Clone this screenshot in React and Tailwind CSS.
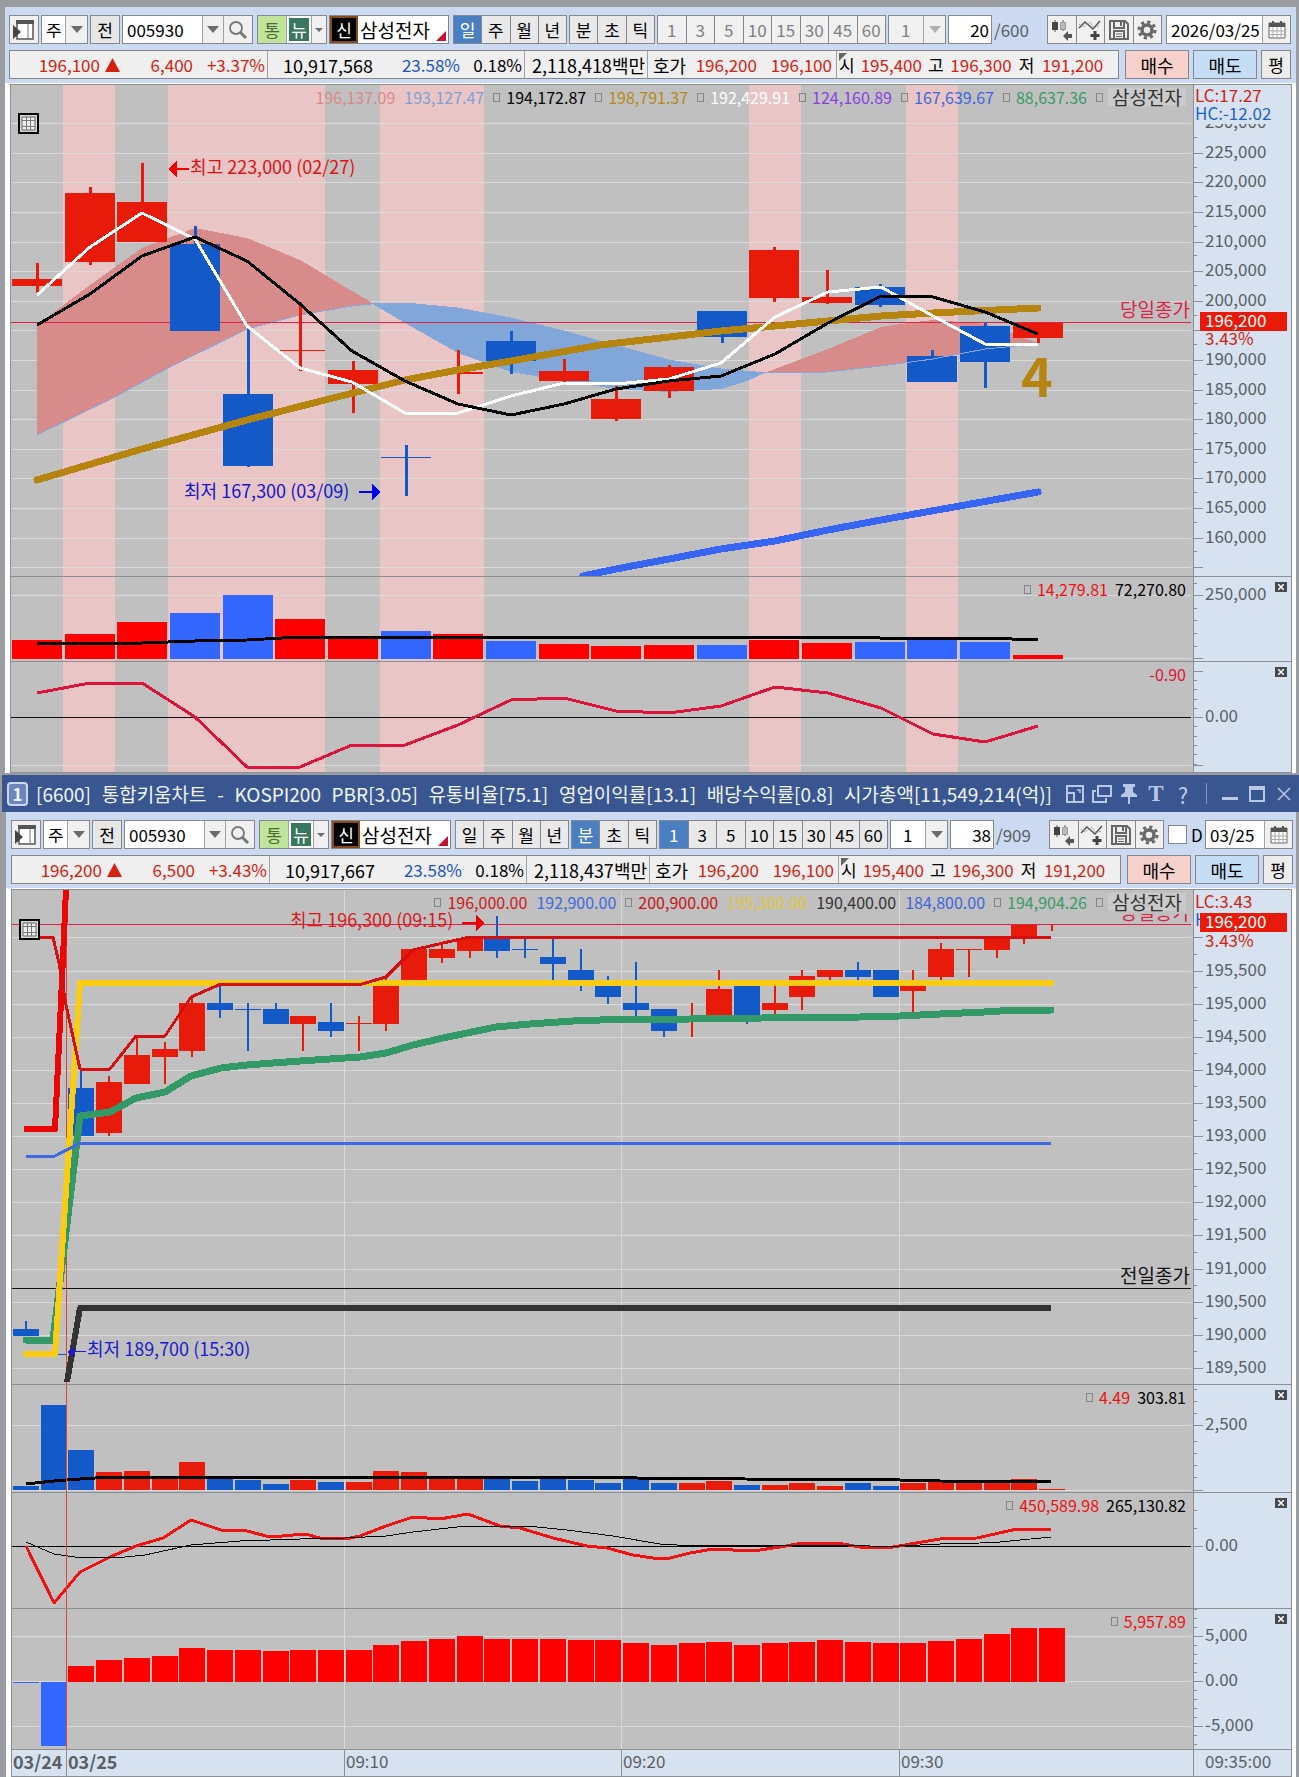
import React from "react";

/* ---------- shared data helpers ---------- */
const RED = "#e81a0a";
const BLUE = "#135ac8";
const GRID = "#d9d9d9";
const AXIS = "#8c8f93";
const LABEL = "#5a5f66";

const pts = (list) => list.map((p) => p.join(",")).join(" ");

const day = { cx: (i) => Math.round(37 + 52.67 * i), w: 50, left: (i) => Math.round(12 + 52.67 * i) };
const min = { cx: (i) => Math.round(26 + 27.73 * i), w: 26, left: (i) => Math.round(13 + 27.73 * i) };

/* candle: [colour, high, bodyTop, bodyBottom, low] */
const dayCandles = [
  ["r", 263, 279, 286, 293], ["r", 187, 193, 262, 265], ["r", 163, 202, 242, 242],
  ["b", 226, 244, 331, 331], ["b", 329, 394, 466, 467], ["r", 302, 350, 351, 371],
  ["r", 361, 370, 384, 413], ["b", 445, 457, 458, 496], ["r", 350, 372, 374, 394],
  ["b", 331, 341, 361, 374], ["r", 359, 371, 381, 382], ["r", 386, 399, 419, 421],
  ["r", 365, 367, 391, 398], ["b", 311, 311, 337, 343], ["r", 247, 250, 298, 302],
  ["r", 270, 297, 303, 304], ["b", 284, 287, 305, 307], ["b", 350, 356, 382, 382],
  ["b", 323, 326, 362, 388], ["r", 323, 323, 338, 343],
];
const dayVolume = [
  ["r", 640], ["r", 634], ["r", 622], ["b", 613], ["b", 595], ["r", 619], ["r", 637], ["b", 631],
  ["r", 634], ["b", 641], ["r", 644], ["r", 646], ["r", 645], ["b", 645], ["r", 640], ["r", 643],
  ["b", 642], ["b", 640], ["b", 642], ["r", 655],
];
const bands = [[63, 115], [168, 325], [380, 484], [749, 801], [906, 958]];

const minCandles = [
  ["b", 1321, 1329, 1336, 1336], ["b", 1354, 1354, 1355, 1355], ["b", 1070, 1088, 1136, 1136],
  ["r", 1076, 1082, 1133, 1136], ["r", 1037, 1055, 1084, 1084], ["r", 1042, 1049, 1057, 1084],
  ["r", 998, 1003, 1051, 1057], ["b", 983, 1003, 1010, 1018], ["b", 1003, 1009, 1010, 1051],
  ["b", 1003, 1009, 1024, 1024], ["r", 1016, 1016, 1024, 1051], ["b", 1003, 1022, 1031, 1037],
  ["r", 1016, 1023, 1024, 1051], ["r", 976, 986, 1024, 1031], ["r", 949, 949, 980, 980],
  ["r", 943, 949, 958, 963], ["r", 938, 938, 951, 958], ["b", 916, 938, 951, 958],
  ["b", 938, 949, 950, 958], ["b", 938, 957, 964, 980], ["b", 949, 970, 980, 991],
  ["b", 976, 980, 997, 1004], ["b", 962, 1003, 1010, 1017], ["b", 1009, 1009, 1031, 1037],
  ["r", 1003, 1018, 1019, 1037], ["r", 970, 989, 1016, 1016], ["b", 986, 986, 1017, 1024],
  ["r", 986, 1003, 1010, 1016], ["r", 970, 976, 997, 1010], ["r", 970, 970, 977, 980],
  ["b", 962, 970, 977, 980], ["b", 970, 970, 997, 997], ["r", 970, 986, 991, 1012],
  ["r", 943, 949, 977, 980], ["r", 949, 949, 950, 977], ["r", 938, 938, 950, 958],
  ["r", 924, 924, 937, 944], ["r", 924, 924, 925, 931],
];
const minVolume = [
  ["b", 1486], ["b", 1405], ["b", 1450], ["r", 1472], ["r", 1471], ["r", 1478], ["r", 1462], ["b", 1478],
  ["b", 1480], ["b", 1484], ["r", 1480], ["b", 1482], ["r", 1482], ["r", 1471], ["r", 1472], ["r", 1478],
  ["r", 1478], ["b", 1478], ["b", 1481], ["b", 1478], ["b", 1480], ["b", 1483], ["b", 1479], ["b", 1483],
  ["r", 1483], ["r", 1481], ["b", 1485], ["r", 1485], ["r", 1483], ["r", 1486], ["b", 1483], ["b", 1486],
  ["r", 1483], ["r", 1481], ["r", 1483], ["r", 1483], ["r", 1479], ["r", 1489],
];
const netBuy = [
  1666, 1660, 1658, 1656, 1648, 1650, 1650, 1651, 1650, 1650, 1650, 1645, 1641, 1639, 1636, 1639, 1639,
  1639, 1640, 1640, 1643, 1645, 1643, 1642, 1645, 1643, 1642, 1640, 1642, 1643, 1643, 1641, 1639, 1634,
  1628, 1628,
];

/* ---------- small building blocks ---------- */
const Chevron = ({ muted }) => (
  <svg viewBox="0 0 12 7" className="h-[7px] w-3" aria-hidden="true">
    <path d="M0 0h12L6 7z" fill={muted ? "#b0b0b0" : "#6b6b6b"} />
  </svg>
);

const box = "flex h-full border border-[#84888c]";
const cell = "flex items-center justify-center";

function Combo({ label, value, className, disabled }) {
  return (
    <div className={`relative flex h-full border border-[#84888c] ${className} ${disabled ? "bg-[#f0f0f0]" : "bg-white"}`}>
      <select
        aria-label={label}
        disabled={disabled}
        defaultValue={value}
        className={`h-full w-full appearance-none pl-3 ${disabled ? "text-[#808080] opacity-100" : "text-black"}`}
      >
        <option>{value}</option>
      </select>
      <span className="pointer-events-none absolute inset-y-0 right-0 flex w-[22px] items-center justify-center border-l border-[#a0a3a6] bg-[#f0f0f0]">
        <Chevron muted={disabled} />
      </span>
    </div>
  );
}

function Segments({ items, active, disabled, className }) {
  return (
    <div className={`${box} divide-x divide-[#84888c] ${className}`}>
      {items.map((t) => (
        <button
          key={t}
          type="button"
          disabled={disabled}
          className={`${cell} flex-1 basis-0 ${
            t === active ? "bg-[#4a7fc1] text-white" : disabled ? "bg-[#f0f0f0] text-[#808080]" : "bg-[#e9e9e9] text-black"
          }`}
        >
          {t}
        </button>
      ))}
    </div>
  );
}

const ToggleIcon = () => (
  <svg viewBox="0 0 22 22" className="h-[22px] w-[22px]" aria-hidden="true">
    <rect x="4" y="2" width="16" height="18" fill="#fff" stroke="#555" strokeWidth="1.5" />
    <path d="M3 1h18v4H3z" fill="#555" />
    <path d="M15 5v15" stroke="#777" />
    <path d="M0 6l8 7-8 7z" fill="#444" />
  </svg>
);
const SearchIcon = () => (
  <svg viewBox="0 0 20 20" className="h-5 w-5" fill="none" stroke="#777" aria-hidden="true">
    <circle cx="8" cy="8" r="6" strokeWidth="1.8" />
    <path d="M12.500 12.500L18 18" strokeWidth="3" />
  </svg>
);
const CandleIcon = () => (
  <svg viewBox="0 0 24 24" className="h-6 w-6" aria-hidden="true">
    <path d="M5 2v12M13 2v11" stroke="#555" />
    <path d="M2 4h6v8H2z" fill="#444" />
    <path d="M10.500 4.500h5v7h-5z" fill="#bbb" stroke="#999" />
    <path d="M13 18l5-5v3h4v4h-4v3z" fill="#555" />
  </svg>
);
const LineIcon = () => (
  <svg viewBox="0 0 24 24" className="h-6 w-6" fill="none" aria-hidden="true">
    <path d="M1 10l6-6 8 7 7-8" stroke="#555" strokeWidth="1.500" />
    <path d="M1 6l4 3 7-5 4 6 5-2" stroke="#999" strokeDasharray="2 1" />
    <path d="M17 13v9M12.500 17.500h9" stroke="#444" strokeWidth="3" />
  </svg>
);
const SaveIcon = () => (
  <svg viewBox="0 0 22 22" className="h-[22px] w-[22px]" fill="none" stroke="#666" strokeWidth="2" aria-hidden="true">
    <path d="M2 2h15l3 3v15H2z" />
    <path d="M6 2v7h10V2M6 20v-8h10v8" />
    <path d="M8 15h6M8 17.500h6" strokeWidth="1" />
    <path d="M13 3v4" />
  </svg>
);
const GearIcon = () => (
  <svg viewBox="0 0 22 22" className="h-[22px] w-[22px]" fill="none" stroke="#686868" aria-hidden="true">
    <circle cx="11" cy="11" r="5" strokeWidth="3.500" />
    <circle cx="11" cy="11" r="8" strokeWidth="3" strokeDasharray="3.140 3.140" />
  </svg>
);
const CalendarIcon = () => (
  <svg viewBox="0 0 18 18" className="h-[18px] w-[18px]" aria-hidden="true">
    <path d="M1 2h16v15H1z" fill="#fff" stroke="#666" />
    <path d="M1 2h16v4H1zM4 0h2v3H4zM12 0h2v3h-2z" fill="#555" />
    <path d="M1 10h16M1 13.500h16M5 6v11M9 6v11M13 6v11" stroke="#aaa" />
  </svg>
);

const tools = [
  ["봉 추가", CandleIcon],
  ["지표 추가", LineIcon],
  ["저장", SaveIcon],
  ["설정", GearIcon],
];

function Toolbar({ intraday, count, total, date }) {
  const id = intraday ? "m" : "d";
  return (
    <div className="flex h-[29px] gap-[2px] text-[17px] leading-none">
      <button type="button" aria-label="메뉴" className={`${box} ${cell} w-[30px] bg-[#f0f0f0]`}><ToggleIcon /></button>
      <Combo label="종류" value="주" className="w-[47px] [&>select]:pl-1" />
      <button type="button" className={`${box} ${cell} w-[30px] bg-[#e6e6e6]`}>전</button>
      <div className={`${box} w-[131px] bg-white`}>
        <input aria-label="종목코드" defaultValue="005930" className="w-0 flex-1 pl-1 text-black" />
        <button type="button" aria-label="종목 목록" className={`${cell} w-[21px] border-l border-[#a0a3a6] bg-[#f0f0f0]`}><Chevron /></button>
        <button type="button" aria-label="검색" className={`${cell} w-[29px] border-l border-[#a0a3a6] bg-[#f0f0f0]`}><SearchIcon /></button>
      </div>
      <div className={`${box} ml-[2px] w-[70px] bg-[#f0f0f0]`}>
        <button type="button" className={`${cell} w-7 bg-[#bfe49a] text-[#4a6b35]`}>통</button>
        <button type="button" className={`${cell} w-[26px] border-x border-[#a0a3a6] bg-white p-[2px]`}>
          <span className={`${cell} h-full w-full bg-[#39785e] text-white`}>뉴</span>
        </button>
        <button type="button" aria-label="뉴스 목록" className={`${cell} flex-1`}>
          <svg viewBox="0 0 8 4" className="h-1 w-2" aria-hidden="true"><path d="M0 0h8L4 4z" fill="#6b6b6b" /></svg>
        </button>
      </div>
      <div className={`${box} relative min-w-[100px] flex-1 items-center bg-white`}>
        <span className={`${cell} h-full w-7 shrink-0 border-2 border-[#8a4b14] bg-black text-white`}>신</span>
        <span className="pl-[2px] text-[19px] whitespace-nowrap">삼성전자</span>
        <svg viewBox="0 0 10 10" className="absolute right-[2px] bottom-[2px] h-[10px] w-[10px]" aria-hidden="true">
          <path d="M10 0v10H0z" fill="#c8102e" />
        </svg>
      </div>
      <Segments items={["일", "주", "월", "년"]} active={intraday ? "" : "일"} className="ml-[2px] w-[114px]" />
      <Segments items={["분", "초", "틱"]} active={intraday ? "분" : ""} className="w-[86px]" />
      <Segments
        items={["1", "3", "5", "10", "15", "30", "45", "60"]}
        active={intraday ? "1" : ""}
        disabled={!intraday}
        className="w-[229px]"
      />
      <Combo label="주기" value="1" disabled={!intraday} className="w-[58px]" />
      <input aria-label="봉 개수" defaultValue={count} className="h-full w-[44px] border border-[#84888c] bg-white pr-[2px] text-right text-black" />
      <span className="flex w-[51px] items-center text-[#5a5f66]">/{total}</span>
      <div className={`${box} w-[115px] divide-x divide-[#84888c] bg-[#f0f0f0]`}>
        {tools.map(([name, Icon]) => (
          <button key={name} type="button" aria-label={name} className={`${cell} flex-1`}><Icon /></button>
        ))}
      </div>
      <div className="ml-[2px] flex w-[125px] items-center">
        {intraday && (
          <label className="flex flex-1 items-center gap-1">
            <input type="checkbox" id={`${id}-d`} className="h-[19px] w-[19px] appearance-none border border-[#84888c] bg-white" />
            D
          </label>
        )}
        <div className={`${box} bg-white ${intraday ? "w-[88px]" : "w-full"}`}>
          <input aria-label="날짜" defaultValue={date} className="w-0 flex-1 pl-1 text-black" />
          <button type="button" aria-label="달력" className={`${cell} w-7 border-l border-[#a0a3a6] bg-[#f0f0f0]`}><CalendarIcon /></button>
        </div>
      </div>
    </div>
  );
}

function Quote({ price, change, rate, volume, amount }) {
  const red = "text-[#d8200f]";
  return (
    <div className="flex h-[29px] gap-[4px] text-[17px] leading-none">
      <div className="mr-[2px] flex flex-1 items-center border border-[#84888c] bg-[#efefef] whitespace-nowrap">
        <span className={`w-[90px] text-right ${red}`}>{price}</span>
        <svg viewBox="0 0 15 14" className="ml-[5px] h-[14px] w-[15px]" aria-hidden="true"><path d="M7.500 0L15 14H0z" fill="#d8200f" /></svg>
        <span className={`w-[73px] text-right ${red}`}>{change}</span>
        <span className={`flex h-full w-[75px] items-center justify-end border-r border-[#a0a3a6] pr-[2px] ${red}`}>{rate}</span>
        <span className="w-[105px] text-right text-[18px]">{volume}</span>
        <span className="w-[87px] text-right text-[#1c53c4]">23.58%</span>
        <span className="flex h-full w-[65px] items-center justify-end border-r border-[#a0a3a6] pr-[2px]">0.18%</span>
        <span className="flex h-full w-[123px] items-center justify-end border-r border-[#a0a3a6] pr-[2px] text-[18px]">{amount}백만</span>
        <span className="w-[44px] pl-[5px] text-[18px]">호가</span>
        <span className={`w-[65px] text-right ${red}`}>196,200</span>
        <span className={`w-[75px] text-right ${red}`}>196,100</span>
        <span className="relative ml-1 flex h-full w-[22px] items-center border-l border-[#a0a3a6] pl-[2px]">
          <svg viewBox="0 0 8 8" className="absolute top-[2px] left-[2px] h-2 w-2" aria-hidden="true"><path d="M0 0h8L0 8z" fill="#666" /></svg>
          시
        </span>
        <span className={`w-[64px] text-right ${red}`}>195,400</span>
        <span className="pl-[6px]">고</span>
        <span className={`w-[68px] text-right ${red}`}>196,300</span>
        <span className="pl-[7px]">저</span>
        <span className={`w-[69px] text-right ${red}`}>191,200</span>
      </div>
      <button type="button" className="w-[64px] border border-[#84888c] bg-[#f6d0cb] text-[18px]">매수</button>
      <button type="button" className="w-[64px] border border-[#84888c] bg-[#c5ddf5] text-[18px]">매도</button>
      <button type="button" className="w-[30px] border border-[#84888c] bg-[#ececec]">평</button>
    </div>
  );
}

/* ---------- chart primitives ---------- */
function Candles({ data, scale, wick }) {
  return data.map(([c, h, t, b, l], i) => (
    <g key={i} fill={c === "r" ? RED : BLUE}>
      <rect x={scale.cx(i) - 1} y={h} width={wick} height={Math.max(l - h, 1)} />
      <rect x={scale.left(i)} y={t} width={scale.w} height={b - t} />
    </g>
  ));
}
function Bars({ data, scale, base, red, blue }) {
  return data.map(([c, t], i) => (
    <rect key={i} x={scale.left(i)} y={t} width={scale.w} height={base - t} fill={c === "r" ? red : blue} />
  ));
}
const Line = ({ data, color, width, round }) => (
  <polyline points={pts(data)} fill="none" stroke={color} strokeWidth={width} strokeLinejoin="round" strokeLinecap={round ? "round" : "butt"} />
);
const HGrid = ({ ys, x1, x2 = 1191 }) =>
  ys.map((y) => <rect key={y} x={x1} y={y} width={x2 - x1} height="1" fill={GRID} />);
const Times = ({ top, height }) =>
  [344, 621, 899].map((x) => <rect key={x} x={x} y={top} width="1" height={height} fill={GRID} />);
const Bands = ({ top, height }) =>
  bands.map(([a, b]) => <rect key={a} x={a} y={top} width={b - a} height={height} fill="#e9c5c6" />);

function Legend({ items, name }) {
  return (
    <div className={`absolute top-0 right-0 flex items-center pt-[3px] pr-[7px] text-[16px] leading-[18px] whitespace-nowrap ${name ? "gap-[9px]" : "gap-[7px]"}`}>
      {items.map(([text, color, mark], i) => (
        <span key={i} className="flex items-center gap-[6px]" style={{ color }}>
          {mark && <i className="h-[9px] w-[7px] border border-[#858585]" />}
          {text}
        </span>
      ))}
      {name && (
        <>
          <i className="h-[9px] w-[7px] border border-[#858585]" />
          <span className="-ml-1 w-[78px] bg-[#cacaca] text-center text-[19px] text-[#333]">{name}</span>
        </>
      )}
    </div>
  );
}

function Pane({ left, top, height, children, axis, legend, name, closable, grid }) {
  return (
    <div className={`grid ${left === 11 ? "grid-cols-[1182fr_98fr]" : "grid-cols-[1181fr_98fr]"} border-b border-[#8c8f93]`}>
      <div className="relative min-w-0">
        <svg viewBox={`${left} ${top} ${1193 - left} ${height}`} className="block h-auto w-full" shapeRendering="crispEdges">
          <rect x={left} y={top} width={1193 - left} height={height} fill="#c0c0c0" />
          {children}
        </svg>
        <Legend items={legend} name={name} />
        {grid && (
          <button type="button" aria-label="데이터 표" className={`absolute left-[7px] flex h-[21px] w-[21px] items-center justify-center border-2 border-black bg-[#d4d4d4] ${grid}`}>
            <svg viewBox="0 0 15 15" className="h-[15px] w-[15px]" aria-hidden="true">
              <path d="M1 1h13v13H1z" fill="#eee" stroke="#666" />
              <path d="M5.500 1v13M9.500 1v13M1 4.500h13M1 10.500h13" stroke="#777" />
            </svg>
          </button>
        )}
      </div>
      <div className="relative min-w-0">
        <svg viewBox={`1193 ${top} 98 ${height}`} className="block h-auto w-full bg-[#d6e2f0]" fontSize="17">
          <rect x="1193" y={top} width="1" height={height} fill={AXIS} />
          {axis}
        </svg>
        {closable && (
          <button type="button" aria-label="닫기" className="absolute top-[5px] right-1 flex h-[10px] w-3 items-center justify-center bg-[#474b50]">
            <svg viewBox="0 0 6 6" className="h-[6px] w-[6px]" stroke="#fff" strokeWidth="1.500" aria-hidden="true"><path d="M0 0l6 6M6 0L0 6" /></svg>
          </button>
        )}
      </div>
    </div>
  );
}

const Ticks = ({ major = [], minor = [] }) => (
  <g fill={AXIS}>
    {major.map((y) => <rect key={y} x="1193" y={y} width="10" height="1" />)}
    {minor.map((y) => <rect key={y} x="1193" y={y} width="4" height="1" />)}
  </g>
);
const AxisText = ({ y, children, fill = LABEL, x = 1205 }) => <text x={x} y={y} fill={fill}>{children}</text>;
const range = (a, b, s) => { const r = []; for (let v = a; v <= b; v += s) r.push(Math.round(v)); return r; };

/* ---------- daily chart ---------- */
const dayGrid = range(123.3, 570, 29.59);
const spanA = [[37, 325], [90, 285], [142, 248], [195, 228], [247, 238], [300, 260], [352, 291], [371, 302]];
const spanB = [[371, 304], [352, 306], [300, 315], [247, 329], [168, 368], [115, 397], [37, 435]];
const blueTop = [[371, 303], [405, 303], [458, 308], [511, 318], [564, 331], [600, 341], [669, 360], [721, 369], [767, 373]];
const blueBottom = [[767, 372], [747, 381], [721, 389], [669, 392], [616, 389], [564, 381], [511, 372], [458, 353], [405, 323]];
const red2Top = [[767, 372], [828, 349], [881, 327], [908, 323], [933, 320], [985, 324], [1038, 343]];
const red2Bottom = [[1038, 344], [985, 349], [933, 359], [881, 366], [828, 372], [767, 373]];

function DailyChart() {
  return (
    <div className="border-x border-t border-[#8c8f93]">
      <Pane
        left={11} top={85} height={491} name="삼성전자" grid="top-[28px]"
        legend={[
          ["196,137.09", "#d88b8b"], ["193,127.47", "#80a0d6"], ["194,172.87", "#000", 1], ["198,791.37", "#b5891a", 1],
          ["192,429.91", "#fff", 1], ["124,160.89", "#8a3fe0", 1], ["167,639.67", "#3f66dc", 1], ["88,637.36", "#3a9a66", 1],
        ]}
        axis={
          <>
            <Ticks major={dayGrid.slice(1)} minor={range(137, 560, 29.59)} />
            <AxisText y={128}>230,000</AxisText>
            <rect x="1194" y="85" width="97" height="39" fill="#d6e2f0" />
            {dayGrid.slice(1, 15).map((y, k) => k !== 6 && k < 14 && <AxisText key={y} y={y + 5}>{`${225 - 5 * k},000`}</AxisText>)}
            <AxisText x={1195} y={102} fill="#d8200f">LC:17.27</AxisText>
            <AxisText x={1195} y={120} fill="#1c63c8">HC:-12.02</AxisText>
            <rect x="1200" y="312" width="87" height="19" fill={RED} />
            <AxisText y={327} fill="#fff">196,200</AxisText>
            <AxisText y={345} fill="#d8200f">3.43%</AxisText>
          </>
        }
      >
        <Bands top={85} height={491} />
        <HGrid ys={dayGrid} x1={11} />
        <polygon points={pts([...spanA, ...spanB])} fill="#d88b8b" />
        <polygon points={pts([...blueTop, ...blueBottom])} fill="#80a6da" />
        <polygon points={pts([...red2Top, ...red2Bottom])} fill="#d88b8b" />
        <Line data={[...spanB].reverse().concat(blueTop)} color="#8aa6dc" width="1" />
        <rect x="11" y="322" width="1180" height="1" fill="#dc2348" />
        <Candles data={dayCandles} scale={day} wick={3} />
        <Line data={[...red2Bottom].reverse()} color="#8aa6dc" width="1" />
        <Line round color="#b5850f" width="7" data={[[37, 480], [142, 449], [247, 420], [325, 400], [405, 380], [458, 370], [511, 361], [600, 345], [721, 331], [775, 326], [828, 321], [881, 316], [933, 313], [1038, 308]]} />
        <Line color="#3565f2" width="7" round data={[[583, 576], [616, 569], [669, 559], [721, 549], [775, 541], [828, 530], [881, 520], [1038, 492]]} />
        <Line color="#fff" width="3" data={[[37, 295], [90, 247], [142, 213], [195, 239], [247, 326], [300, 368], [352, 382], [405, 413], [458, 413], [511, 396], [564, 383], [616, 384], [669, 379], [721, 363], [775, 317], [828, 292], [881, 287], [933, 316], [985, 344], [1038, 344]]} />
        <Line color="#000" width="3" data={[[37, 325], [90, 294], [142, 256], [195, 237], [247, 261], [300, 304], [352, 351], [405, 381], [458, 404], [511, 415], [564, 404], [616, 389], [669, 381], [721, 376], [775, 354], [828, 323], [881, 296], [933, 297], [985, 312], [1038, 334]]} />
        <g fontSize="18">
          <text x="190" y="174" fill="#e01010">최고 223,000 (02/27)</text>
          <path d="M168 169l9-8v16zM177 168h12v2h-12z" fill="#f00000" />
          <text x="184" y="498" fill="#1414cc">최저 167,300 (03/09)</text>
          <path d="M381 492l-9-8v16zM359 491h13v2h-13z" fill="#0000f0" />
          <text x="1190" y="317" fill="#dc2348" textAnchor="end" fontSize="19">당일종가</text>
          <text x="1021" y="397" fill="#b5850f" fontSize="54" fontWeight="700">4</text>
        </g>
      </Pane>
      <Pane
        left={11} top={577} height={84} closable
        legend={[["14,279.81", "#f01010", 1], ["72,270.80", "#000"]]}
        axis={<><Ticks major={[595, 658]} minor={[583, 608, 620, 633, 646]} /><AxisText y={600}>250,000</AxisText></>}
      >
        <Bands top={577} height={84} />
        <HGrid ys={[595, 658]} x1={11} />
        <Bars data={dayVolume} scale={day} base={659} red="#ff0000" blue="#3366ff" />
        <Line color="#000" width="3" data={[[37, 643], [142, 643], [195, 641], [247, 640], [300, 637], [880, 638], [985, 638], [1038, 640]]} />
      </Pane>
      <Pane
        left={11} top={662} height={110} closable
        legend={[["-0.90", "#dc143c"]]}
        axis={<><Ticks major={[671, 717, 765]} minor={range(680, 765, 9.3)} /><AxisText y={722}>0.00</AxisText></>}
      >
        <Bands top={662} height={110} />
        <HGrid ys={[765]} x1={11} />
        <rect x="11" y="717" width="1180" height="1" fill="#111" />
        <Line color="#dc143c" width="3" data={[[37, 693], [90, 683], [142, 683], [195, 717], [247, 767], [300, 767], [352, 745], [405, 745], [458, 725], [511, 700], [564, 698], [616, 711], [669, 713], [721, 706], [775, 687], [828, 693], [881, 708], [933, 734], [985, 742], [1038, 726]]} />
      </Pane>
    </div>
  );
}

/* ---------- one-minute chart ---------- */
const minGrid = range(937.4, 1370, 33.12);
const priceNames = ["195,500", "195,000", "194,500", "194,000", "193,500", "193,000", "192,500", "192,000", "191,500", "191,000", "190,500", "190,000", "189,500"];

const DayBreak = ({ top, height }) => <rect x="66" y={top} width="1" height={height} fill="#dc4438" />;

function MinuteChart() {
  return (
    <div className="border-x border-t border-[#8c8f93]">
      <Pane
        left={12} top={890} height={494} name="삼성전자" grid="top-[29px]"
        legend={[
          ["196,000.00", "#d01818", 1], ["192,900.00", "#4169e1"], ["200,900.00", "#c81414", 1], ["195,300.00", "#e3c634"],
          ["190,400.00", "#333"], ["184,800.00", "#3f66dc"], ["194,904.26", "#3a9a66", 1],
        ]}
        axis={
          <>
            <Ticks major={minGrid} minor={range(954, 1370, 33.12)} />
            {priceNames.map((p, k) => <AxisText key={p} y={minGrid[k + 1] + 5}>{p}</AxisText>)}
            <AxisText x={1195} y={908} fill="#d8200f">LC:3.43</AxisText>
            <AxisText x={1195} y={926} fill="#1c63c8">HC:-0.05</AxisText>
            <rect x="1200" y="913" width="87" height="19" fill={RED} />
            <AxisText y={928} fill="#fff">196,200</AxisText>
            <AxisText y={947} fill="#d8200f">3.43%</AxisText>
          </>
        }
      >
        <HGrid ys={minGrid} x1={12} />
        <Times top={890} height={494} />
        <text x="1190" y="920" fill="#dc2348" textAnchor="end" fontSize="19">당일종가</text>
        <rect x="1100" y="890" width="92" height="24" fill="#c0c0c0" />
        <Candles data={minCandles} scale={min} wick={2} />
        <DayBreak top={890} height={494} />
        <rect x="12" y="924" width="1179" height="1" fill="#dc2348" />
        <rect x="12" y="1288" width="1179" height="1" fill="#111" />
        <Line round color="#339966" width="7" data={[[26, 1340], [53, 1340], [80, 1116], [110, 1112], [136, 1098], [165, 1092], [191, 1076], [221, 1068], [247, 1065], [300, 1061], [360, 1057], [386, 1053], [413, 1045], [443, 1038], [496, 1027], [530, 1024], [573, 1021], [600, 1020], [690, 1019], [762, 1018], [860, 1017], [900, 1016], [940, 1014], [984, 1012], [1017, 1010], [1051, 1010]]} />
        <Line color="#facc14" width="6" round data={[[26, 1354], [55, 1354], [80, 983], [1051, 983]]} />
        <Line color="#ea0606" width="6" data={[[24, 1129], [55, 1129], [62, 980], [66, 889]]} />
        <Line color="#d40f0f" width="3" data={[[26, 937], [53, 937], [59, 963], [66, 1005], [80, 1069], [110, 1069], [136, 1036], [165, 1036], [191, 997], [221, 984], [362, 984], [386, 977], [413, 950], [443, 943], [470, 937], [1051, 937]]} />
        <Line color="#4169e1" width="3" data={[[26, 1156], [55, 1156], [80, 1143], [1051, 1143]]} />
        <Line color="#333" width="6" data={[[67, 1382], [80, 1308], [1051, 1308]]} />
        <g fontSize="18">
          <text x="290" y="927" fill="#d8181c">최고 196,300 (09:15)</text>
          <path d="M485 923l-9-8v16zM462 922h14v2h-14z" fill="#f00000" />
          <text x="87" y="1356" fill="#1a1acc">최저 189,700 (15:30)</text>
          <path d="M67 1352l7-5v10zM74 1351h12v1h-12z" fill="#1a1acc" />
          <text x="1190" y="1283" fill="#111" textAnchor="end" fontSize="19">전일종가</text>
        </g>
      </Pane>
      <Pane
        left={12} top={1385} height={107} closable
        legend={[["4.49", "#f01010", 1], ["303.81", "#000"]]}
        axis={<><Ticks major={[1425, 1490]} minor={[1389, 1401, 1413, 1441, 1453, 1465, 1477]} /><AxisText y={1430}>2,500</AxisText></>}
      >
        <HGrid ys={[1425, 1490]} x1={12} />
        <Times top={1385} height={107} />
        <Bars data={minVolume} scale={min} base={1490} red="#e81a0a" blue={BLUE} />
        <Line color="#000" width="3" data={[[26, 1484], [54, 1481], [80, 1479], [110, 1477], [635, 1477], [636, 1478], [745, 1479], [900, 1480], [940, 1481], [1051, 1482]]} />
        <DayBreak top={1385} height={107} />
      </Pane>
      <Pane
        left={12} top={1493} height={115} closable
        legend={[["450,589.98", "#f01010", 1], ["265,130.82", "#000"]]}
        axis={<><Ticks major={[1546]} minor={[1510, 1528]} /><AxisText y={1551}>0.00</AxisText></>}
      >
        <Times top={1493} height={115} />
        <rect x="12" y="1546" width="1179" height="1" fill="#000" />
        <Line color="#ee1212" width="3" data={[[26, 1546], [54, 1603], [80, 1572], [110, 1557], [136, 1546], [163, 1538], [191, 1520], [221, 1530], [247, 1531], [270, 1537], [305, 1534], [320, 1538], [345, 1539], [360, 1536], [386, 1526], [413, 1517], [440, 1519], [468, 1514], [500, 1526], [520, 1528], [553, 1538], [587, 1546], [607, 1548], [633, 1555], [653, 1558], [670, 1558], [690, 1553], [713, 1549], [733, 1550], [760, 1550], [780, 1547], [803, 1543], [837, 1543], [860, 1547], [893, 1547], [940, 1539], [977, 1538], [1017, 1529], [1051, 1529]]} />
        <Line color="#000" width="1" data={[[26, 1542], [54, 1554], [75, 1557], [125, 1557], [145, 1555], [191, 1545], [240, 1541], [300, 1539], [345, 1538], [386, 1536], [413, 1532], [466, 1526], [500, 1526], [537, 1527], [567, 1530], [613, 1536], [660, 1544], [677, 1545], [870, 1546], [900, 1546], [940, 1544], [980, 1543], [1000, 1542], [1051, 1537]]} />
        <DayBreak top={1493} height={115} />
      </Pane>
      <Pane
        left={12} top={1609} height={140} closable
        legend={[["5,957.89", "#f01010", 1]]}
        axis={
          <>
            <Ticks major={[1636, 1681, 1726]} minor={[1609, 1618, 1627, 1645, 1654, 1663, 1672, 1690, 1699, 1708, 1717, 1735, 1744]} />
            <AxisText y={1641}>5,000</AxisText>
            <AxisText y={1686}>0.00</AxisText>
            <AxisText y={1731}>-5,000</AxisText>
          </>
        }
      >
        <HGrid ys={[1636, 1681, 1726]} x1={12} />
        <Times top={1609} height={140} />
        <rect x="13" y="1682" width="26" height="1" fill="#3366ff" />
        <rect x="41" y="1682" width="25" height="64" fill="#3366ff" />
        {netBuy.map((t, i) => (
          <rect key={i} x={min.left(i + 2)} y={t} width="26" height={1682 - t} fill="#ff0000" />
        ))}
        <DayBreak top={1609} height={140} />
      </Pane>
      <div className="grid h-[27px] grid-cols-[54fr_278fr_277fr_278fr_294fr_98fr] border-b border-[#8c8f93] bg-[#d6e2f0] text-[17px] leading-[22px] text-[#5a5f66] *:min-w-0 *:border-l *:border-[#8c8f93] *:pl-px *:whitespace-nowrap">
        <span className="border-l-0! text-[18px] font-bold">03/24</span>
        <span className="text-[18px] font-bold">03/25</span>
        <span>09:10</span>
        <span>09:20</span>
        <span>09:30</span>
        <span className="pl-[11px]!">09:35:00</span>
      </div>
    </div>
  );
}

const titleButton = "flex h-6 w-6 items-center justify-center text-[#b9c8e6]";
function TitleBar() {
  const parts = ["[6600]", "통합키움차트", "-", "KOSPI200", "PBR[3.05]", "유통비율[75.1]", "영업이익률[13.1]", "배당수익률[0.8]", "시가총액[11,549,214(억)]"];
  return (
    <header className="flex h-[37px] items-center bg-[#3a5690] pr-[3px] pl-[5px] text-[19px] leading-none text-[#f0f4fc]">
      <span className="flex h-6 w-[21px] items-center justify-center rounded-[4px] border-2 border-[#cdd8ee] bg-[#6b86bd] text-[17px] font-bold">1</span>
      <h1 className="ml-2 flex w-[1016px] justify-between font-normal whitespace-nowrap">
        {parts.map((p) => <span key={p}>{p}</span>)}
      </h1>
      <div className="ml-auto flex items-center gap-[3px]">
        <button type="button" aria-label="도킹" className={titleButton}>
          <svg viewBox="0 0 18 18" className="h-[18px] w-[18px]" fill="none" stroke="currentColor" strokeWidth="2"><path d="M1 1h16v16H1z" /><path d="M1 8h7v9" /><path d="M11 5h3v3" strokeWidth="1.500" /></svg>
        </button>
        <button type="button" aria-label="복사" className={titleButton}>
          <svg viewBox="0 0 20 18" className="h-[18px] w-5" fill="none" stroke="currentColor" strokeWidth="2"><path d="M6 1h13v10H6z" /><path d="M4 6H1v11h13v-4" /></svg>
        </button>
        <button type="button" aria-label="고정" className={titleButton}>
          <svg viewBox="0 0 18 20" className="h-5 w-[18px]" fill="currentColor"><path d="M3 0h12v3h-2v5l4 3v2H1v-2l4-3V3H3zM8 13h2v7H8z" /></svg>
        </button>
        <button type="button" aria-label="글꼴" className={`${titleButton} font-['Liberation_Serif',serif] text-[23px] font-bold`}>T</button>
        <button type="button" aria-label="도움말" className={`${titleButton} text-[22px]`}>?</button>
        <span className="mx-2 h-[21px] w-px bg-[#7f95c4]" />
        <button type="button" aria-label="최소화" className={titleButton}>
          <svg viewBox="0 0 16 16" className="h-4 w-4" fill="currentColor"><path d="M0 11h16v3H0z" /></svg>
        </button>
        <button type="button" aria-label="최대화" className={titleButton}>
          <svg viewBox="0 0 16 16" className="h-4 w-4" fill="none" stroke="currentColor" strokeWidth="2"><path d="M1 1h14v14H1zM1 3h14" /></svg>
        </button>
        <button type="button" aria-label="닫기" className={titleButton}>
          <svg viewBox="0 0 14 14" className="h-[14px] w-[14px]" fill="none" stroke="currentColor" strokeWidth="1.500"><path d="M1 1l12 12M13 1L1 13" /></svg>
        </button>
      </div>
    </header>
  );
}

export default function App() {
  return (
    <main className="bg-[#999ca1] font-['Noto_Sans_CJK_KR','Noto_Sans',sans-serif] text-black">
      <section className="pt-[7px] pr-[3px] pb-[2px] pl-[5px]">
        <div className="flex flex-col gap-[6px] bg-[#cbdaf0] pt-2 pr-[5px] pb-1 pl-1">
          <Toolbar count="20" total="600" date="2026/03/25" />
          <Quote price="196,100" change="6,400" rate="+3.37%" volume="10,917,568" amount="2,118,418" />
        </div>
        <div className="bg-white pt-px pr-1 pl-[5px]"><DailyChart /></div>
      </section>
      <section>
        <div className="pl-[2px]"><TitleBar /></div>
        <div className="pr-[3px] pl-[6px]">
          <div className="flex flex-col gap-[6px] bg-[#cbdaf0] pt-2 pr-[3px] pb-1 pl-[5px]">
            <Toolbar intraday count="38" total="909" date="03/25" />
            <Quote price="196,200" change="6,500" rate="+3.43%" volume="10,917,667" amount="2,118,437" />
          </div>
          <div className="bg-white pt-px pr-1 pl-[5px]"><MinuteChart /></div>
        </div>
      </section>
    </main>
  );
}
